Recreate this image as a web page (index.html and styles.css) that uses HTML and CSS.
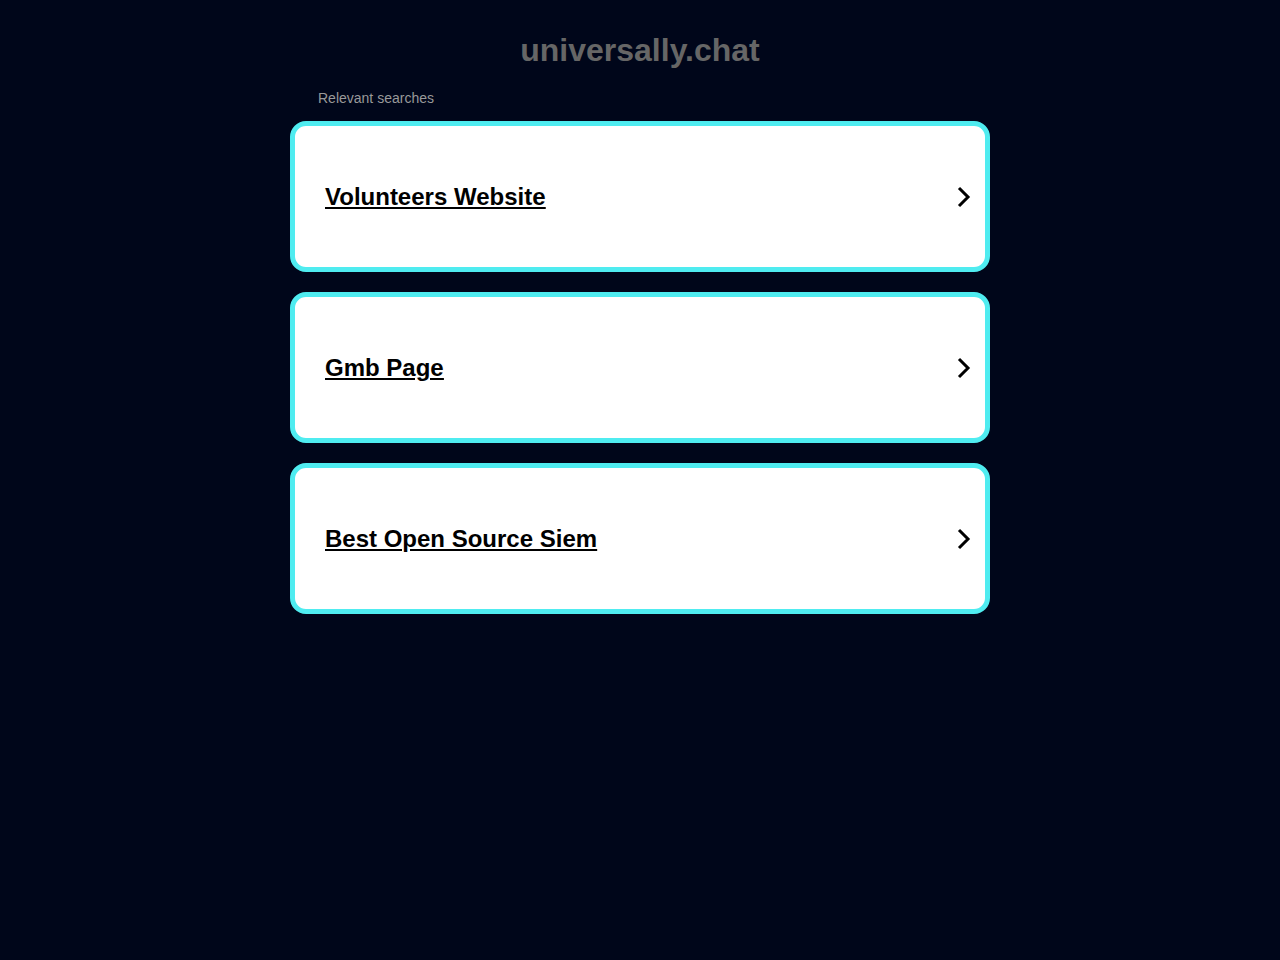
FILE: index.html
```html
<!DOCTYPE html>
<html lang="en">
<head>
    <meta charset="UTF-8">
    <meta name="viewport" content="width=device-width, initial-scale=1.0">
    <title>universally.chat</title>
    <link rel="stylesheet" href="styles.css">
</head>
<body>
    <div class="wrapper">
        <h1 class="domain">universally.chat</h1>
        <div class="searches">
            <p class="searches-label">Relevant searches</p>
            <a class="search-card" href="#">
                <span class="search-text">Volunteers Website</span>
                <svg class="chevron" width="16" height="22" viewBox="0 0 16 22"><path d="M4 2 L13 11 L4 20" fill="none" stroke="#000" stroke-width="3"/></svg>
            </a>
            <a class="search-card" href="#">
                <span class="search-text">Gmb Page</span>
                <svg class="chevron" width="16" height="22" viewBox="0 0 16 22"><path d="M4 2 L13 11 L4 20" fill="none" stroke="#000" stroke-width="3"/></svg>
            </a>
            <a class="search-card" href="#">
                <span class="search-text">Best Open Source Siem</span>
                <svg class="chevron" width="16" height="22" viewBox="0 0 16 22"><path d="M4 2 L13 11 L4 20" fill="none" stroke="#000" stroke-width="3"/></svg>
            </a>
        </div>
    </div>
</body>
</html>
```

FILE: styles.css
```css
body {
    margin: 0;
    background-color: #00061a;
    font-family: "Liberation Sans", Arial, sans-serif;
}

.wrapper {
    width: 700px;
    margin: 0 auto;
    padding-top: 31px;
}

.domain {
    margin: 0;
    text-align: center;
    font-size: 32px;
    line-height: 38px;
    font-weight: bold;
    color: #666666;
}

.searches-label {
    margin: 20px 0 14px 28px;
    font-size: 14px;
    line-height: 18px;
    color: #999999;
}

.search-card {
    display: flex;
    justify-content: space-between;
    align-items: center;
    height: 140px;
    margin-bottom: 20px;
    padding: 1px 14px 0 30px;
    background-color: #ffffff;
    border: 5px solid #4fecf0;
    border-radius: 16px;
    color: #000000;
}

.search-text {
    font-size: 24px;
    font-weight: bold;
    text-decoration: underline;
}

.chevron {
    display: block;
}
```
